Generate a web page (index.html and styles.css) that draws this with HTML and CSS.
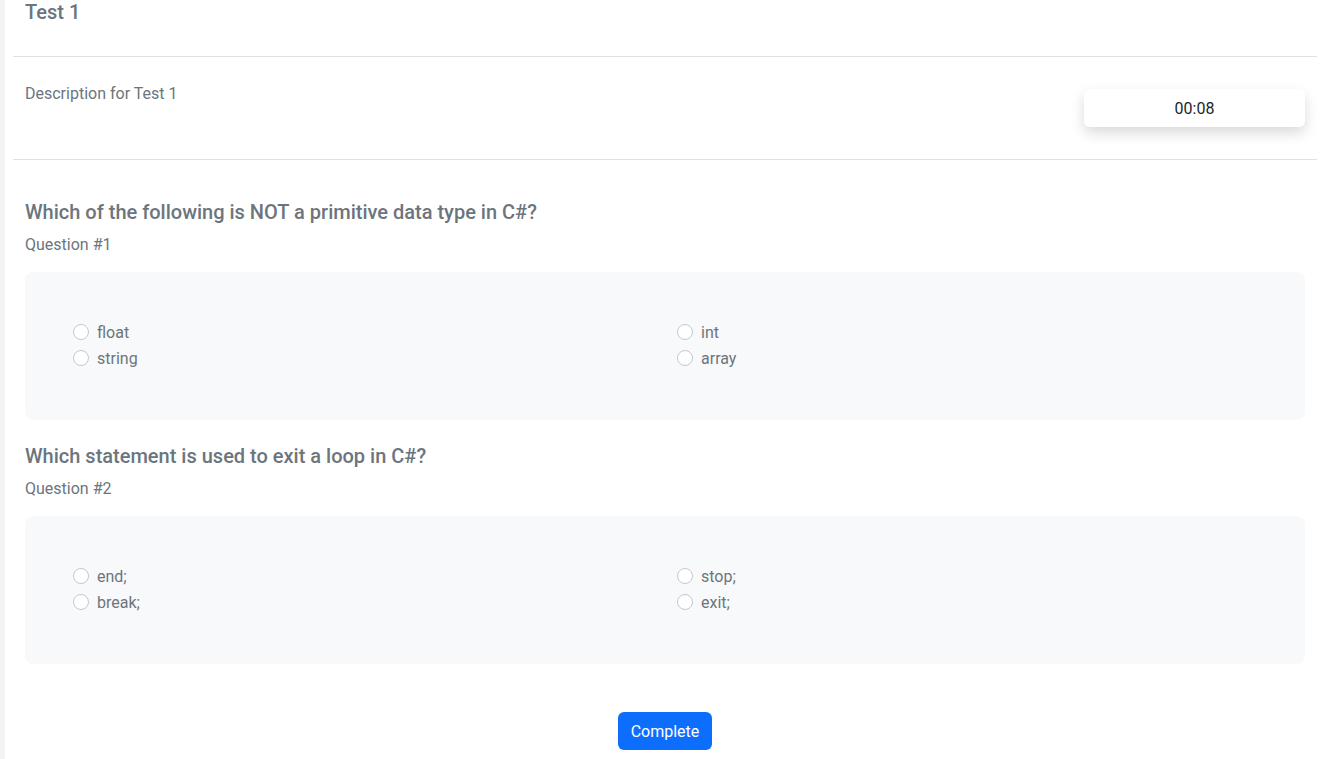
FILE: index.html
```html
<!DOCTYPE html>
<html>
<head>
<meta charset="utf-8">
<link rel="stylesheet" href="styles.css">
</head>
<body>
<div class="layout">
  <div class="strip"></div>
  <main class="main">
    <div class="head">
      <h1 class="title">Test 1</h1>
    </div>
    <div class="desc-row">
      <p class="desc">Description for Test 1</p>
      <div class="timer">00:08</div>
    </div>
    <div class="questions">
      <section class="question">
        <h2 class="q-title">Which of the following is NOT a primitive data type in C#?</h2>
        <div class="q-num">Question #1</div>
        <div class="options">
          <label class="opt"><span class="radio"></span>float</label>
          <label class="opt"><span class="radio"></span>int</label>
          <label class="opt"><span class="radio"></span>string</label>
          <label class="opt"><span class="radio"></span>array</label>
        </div>
      </section>
      <section class="question">
        <h2 class="q-title">Which statement is used to exit a loop in C#?</h2>
        <div class="q-num">Question #2</div>
        <div class="options">
          <label class="opt"><span class="radio"></span>end;</label>
          <label class="opt"><span class="radio"></span>stop;</label>
          <label class="opt"><span class="radio"></span>break;</label>
          <label class="opt"><span class="radio"></span>exit;</label>
        </div>
      </section>
      <div class="actions">
        <button class="btn">Complete</button>
      </div>
    </div>
  </main>
</div>
</body>
</html>
```

FILE: styles.css
```css
* { box-sizing: border-box; }
html, body { margin: 0; padding: 0; background: #fff; }
body {
  font-family: Roboto, "Noto Sans", sans-serif;
  color: #6c757d;
  height: 759px;
  overflow: hidden;
}
.layout { display: flex; min-height: 759px; }
.strip { width: 5px; background: #f3f3f3; flex: none; }
.main { flex: 1; padding: 0 3px 0 8px; }
.head {
  height: 57px;
  border-bottom: 1px solid #dee2e6;
  padding: 0 12px;
}
.title {
  margin: 0;
  font-size: 20px;
  font-weight: 500;
  line-height: 24px;
  color: #6c757d;
}
.desc-row {
  display: flex;
  justify-content: space-between;
  align-items: flex-start;
  height: 103px;
  border-bottom: 1px solid #dee2e6;
  padding: 0 12px;
}
.desc {
  margin: 25px 0 0;
  font-size: 16px;
  line-height: 24px;
}
.timer {
  margin-top: 32px;
  width: 221px;
  height: 38px;
  background: #fff;
  border-radius: 6px;
  box-shadow: 0 6px 14px rgba(0,0,0,0.15);
  display: flex;
  align-items: center;
  justify-content: center;
  font-size: 16px;
  color: #212529;
}
.questions { padding: 40px 12px 0; }
.question { margin-bottom: 24px; }
.q-title {
  margin: 0;
  font-size: 20px;
  font-weight: 500;
  line-height: 24px;
  color: #6c757d;
}
.q-num {
  margin-top: 9px;
  font-size: 16px;
  line-height: 24px;
}
.options {
  margin-top: 15px;
  background: #f8f9fa;
  border-radius: 8px;
  padding: 47px 48px 49px;
  display: grid;
  grid-template-columns: 1fr 1fr;
  column-gap: 24px;
}
.opt {
  display: flex;
  align-items: center;
  height: 26px;
  font-size: 16px;
  color: #6c757d;
}
.radio {
  width: 16px;
  height: 16px;
  border: 1px solid #c4c8cc;
  border-radius: 50%;
  background: #fff;
  margin-right: 8px;
  flex: none;
}
.actions {
  display: flex;
  justify-content: center;
  padding-top: 24px;
}
.btn {
  font-family: Roboto, "Noto Sans", sans-serif;
  background: #0d6efd;
  color: #fff;
  border: none;
  border-radius: 6px;
  width: 94px;
  height: 38px;
  font-size: 16px;
}
```
